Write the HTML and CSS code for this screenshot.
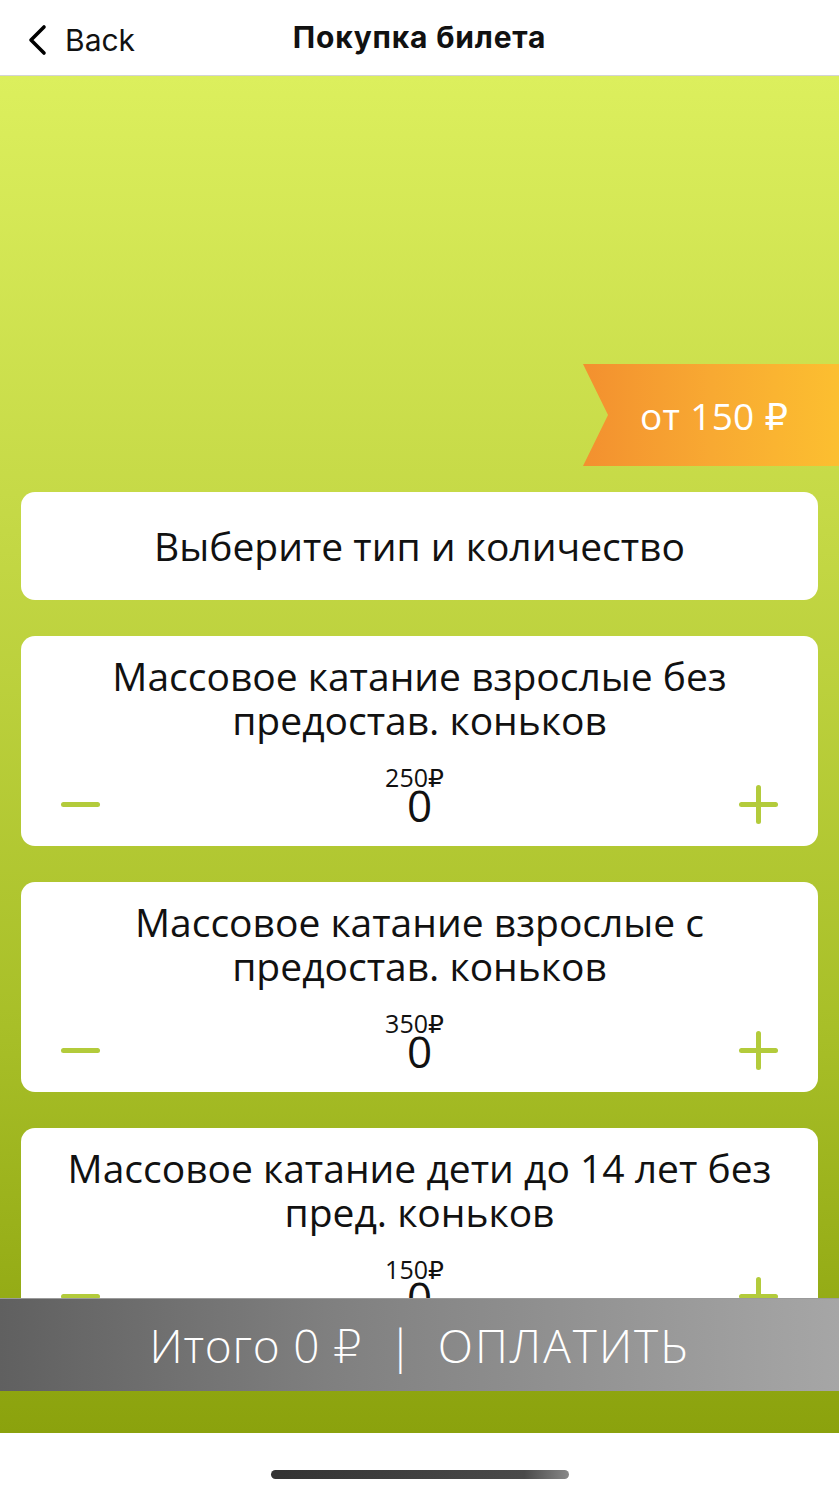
FILE: index.html
```html
<!DOCTYPE html>
<html lang="ru">
<head>
<meta charset="utf-8">
<link rel="stylesheet" href="styles.css">
</head>
<body>
<div class="screen">
  <header class="topbar">
    <div class="back">
      <svg class="chev" width="22" height="32" viewBox="0 0 22 32"><path d="M18 3 L5 16 L18 29" fill="none" stroke="#000" stroke-width="3.6" stroke-linecap="round" stroke-linejoin="round"/></svg>
      <span>Back</span>
    </div>
    <div class="title">Покупка билета</div>
  </header>
  <main class="main">
    <div class="scroll">
      <div class="ribbon">от 150 ₽</div>
      <div class="card card-head">Выберите тип и количество</div>
      <div class="card ticket">
        <div class="t-name">Массовое катание взрослые без предостав. коньков</div>
        <div class="t-row">
          <span class="minus"></span>
          <div class="counter"><div class="price">250₽</div><div class="qty">0</div></div>
          <span class="plus"></span>
        </div>
      </div>
      <div class="card ticket">
        <div class="t-name">Массовое катание взрослые с предостав. коньков</div>
        <div class="t-row">
          <span class="minus"></span>
          <div class="counter"><div class="price">350₽</div><div class="qty">0</div></div>
          <span class="plus"></span>
        </div>
      </div>
      <div class="card ticket">
        <div class="t-name">Массовое катание дети до 14 лет без пред. коньков</div>
        <div class="t-row">
          <span class="minus"></span>
          <div class="counter"><div class="price">150₽</div><div class="qty">0</div></div>
          <span class="plus"></span>
        </div>
      </div>
    </div>
    <div class="paybar"><span>Итого 0 ₽</span><span class="sep">|</span><span class="pay">ОПЛАТИТЬ</span></div>
  </main>
  <footer class="homebar"><span class="indicator"></span></footer>
</div>
</body>
</html>
```

FILE: styles.css
```css
* { box-sizing: border-box; }
html, body { margin: 0; padding: 0; }
body { width: 839px; height: 1492px; overflow: hidden; background: #fff; font-family: "Open Sans", "DejaVu Sans", sans-serif; }
.screen { display: flex; flex-direction: column; height: 1492px; }
.topbar {
  height: 76px; flex: none; position: relative;
  display: flex; align-items: center; justify-content: center;
  background: #fff; border-bottom: 1px solid #d4d4d4;
}
.back {
  position: absolute; left: 26px; top: 22px;
  display: flex; align-items: center; gap: 17px;
  font-family: Inter, "Liberation Sans", sans-serif; font-size: 30px; color: #111;
}
.title { font-family: Inter, "Liberation Sans", sans-serif; font-weight: 700; font-size: 30px; letter-spacing: 0.8px; color: #111; margin-top: -2px; }
.main {
  flex: none; height: 1357px; position: relative; overflow: hidden;
  background: linear-gradient(180deg, #dcef5d 0%, #c3d744 35%, #a8bf28 70%, #8ba20d 100%);
}
.scroll { display: flex; flex-direction: column; gap: 36px; padding: 0 21px; }
.ribbon {
  align-self: flex-end; margin-right: -21px; margin-top: 288px; margin-bottom: -10px;
  width: 256px; height: 102px; padding-left: 57px;
  display: flex; align-items: center; justify-content: flex-start;
  color: #fff; font-size: 37px; letter-spacing: 0.3px;
  background: linear-gradient(90deg, #f3902f 0%, #f8a932 50%, #fcbf30 100%);
  clip-path: polygon(0 0, 100% 0, 100% 100%, 0 100%, 25px 50%);
}
.card { background: #fff; border-radius: 14px; }
.card-head {
  height: 108px; padding-bottom: 2px; display: flex; align-items: center; justify-content: center;
  font-size: 39px; color: #111;
}
.ticket { height: 210px; padding: 18px 20px 0; text-align: center; color: #111; }
.t-name { font-size: 39px; line-height: 44px; }
.t-row { display: flex; align-items: flex-end; justify-content: space-between; margin-top: 22px; padding: 0 20px; }
.counter { display: flex; flex-direction: column; align-items: center; }
.price { font-size: 25px; line-height: 26px; margin-right: 10px; }
.qty { font-size: 44px; line-height: 30px; }
.minus, .plus { width: 39px; height: 39px; position: relative; display: block; margin-bottom: -4px; }
.minus::before, .plus::before {
  content: ""; position: absolute; left: 0; top: 17px; width: 39px; height: 5px;
  background: #b3cb3b; border-radius: 3px;
}
.plus::after {
  content: ""; position: absolute; left: 17px; top: 0; width: 5px; height: 39px;
  background: #b3cb3b; border-radius: 3px;
}
.paybar {
  position: absolute; left: 0; right: 0; bottom: 42px; height: 93px;
  display: flex; align-items: center; justify-content: center;
  background: linear-gradient(90deg, #606060 0%, #808080 40%, #a6a6a6 100%);
  color: #fff; font-size: 46px; font-weight: 300; letter-spacing: 0.8px;
  border-top: 1px solid #9a9a9a;
}
.sep { margin: 0 24px 0 25px; }
.pay { letter-spacing: 2px; }
.homebar { flex: 1; display: flex; justify-content: center; padding-top: 37px; }
.indicator { width: 298px; height: 9px; border-radius: 5px; background: linear-gradient(90deg, #333 0%, #4a4a4a 85%, #888 100%); }
```
